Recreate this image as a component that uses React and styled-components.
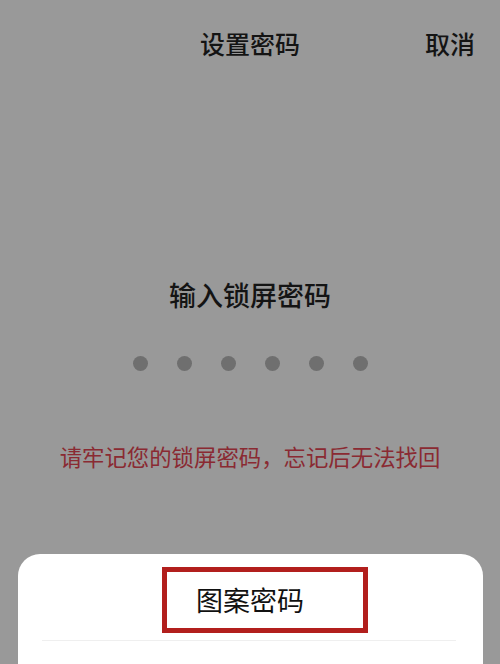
import styled, { createGlobalStyle } from 'styled-components';

const GlobalStyle = createGlobalStyle`
  html, body {
    margin: 0;
    padding: 0;
    background: #999999;
    font-family: "Noto Sans CJK SC", "Noto Sans", sans-serif;
  }
`;

const StyledScreen = styled.div`
  width: 500px;
  height: 664px;
  display: flex;
  flex-direction: column;
  background: #999999;
  overflow: hidden;
`;

const StyledHeader = styled.header`
  height: 86px;
  display: grid;
  grid-template-columns: 1fr auto 1fr;
  align-items: center;
  color: #141414;
`;

const StyledTitle = styled.h1`
  grid-column: 2;
  margin: 0;
  font-size: 25px;
  font-weight: 500;
  line-height: 30px;
`;

const StyledCancel = styled.span`
  justify-self: end;
  padding-right: 25px;
  font-size: 25px;
  font-weight: 500;
  line-height: 30px;
`;

const StyledBody = styled.main`
  display: flex;
  flex-direction: column;
  align-items: center;
  padding-top: 193px;
`;

const StyledPrompt = styled.p`
  margin: 0;
  font-size: 27px;
  font-weight: 500;
  line-height: 32px;
  color: #141414;
`;

const StyledDots = styled.div`
  display: flex;
  gap: 29px;
  margin-top: 45px;
`;

const StyledDot = styled.span`
  width: 15px;
  height: 15px;
  border-radius: 50%;
  background: #6f6f6f;
`;

const StyledWarning = styled.p`
  margin: 72px 0 0;
  font-size: 22.4px;
  line-height: 26px;
  color: #8a2a32;
`;

const StyledSheet = styled.section`
  margin: auto 17px 0 18px;
  height: 110px;
  box-sizing: border-box;
  padding: 13px 27px 0 24px;
  background: #ffffff;
  border-radius: 22px 22px 0 0;
  display: flex;
  flex-direction: column;
  align-items: center;
`;

const StyledOption = styled.div`
  width: 206px;
  height: 66px;
  margin-left: 32px;
  padding-right: 30px;
  box-sizing: border-box;
  border: 5px solid #b21f1d;
  display: flex;
  align-items: center;
  justify-content: center;
  font-size: 27px;
  line-height: 32px;
  color: #111111;
`;

const StyledDivider = styled.hr`
  align-self: stretch;
  margin: 7px 0 0;
  border: none;
  border-top: 1px solid #efefef;
`;

export default function App() {
  return (
    <StyledScreen>
      <GlobalStyle />
      <StyledHeader>
        <StyledTitle>设置密码</StyledTitle>
        <StyledCancel>取消</StyledCancel>
      </StyledHeader>
      <StyledBody>
        <StyledPrompt>输入锁屏密码</StyledPrompt>
        <StyledDots>
          {[0, 1, 2, 3, 4, 5].map((i) => (
            <StyledDot key={i} />
          ))}
        </StyledDots>
        <StyledWarning>请牢记您的锁屏密码，忘记后无法找回</StyledWarning>
      </StyledBody>
      <StyledSheet>
        <StyledOption>图案密码</StyledOption>
        <StyledDivider />
      </StyledSheet>
    </StyledScreen>
  );
}
